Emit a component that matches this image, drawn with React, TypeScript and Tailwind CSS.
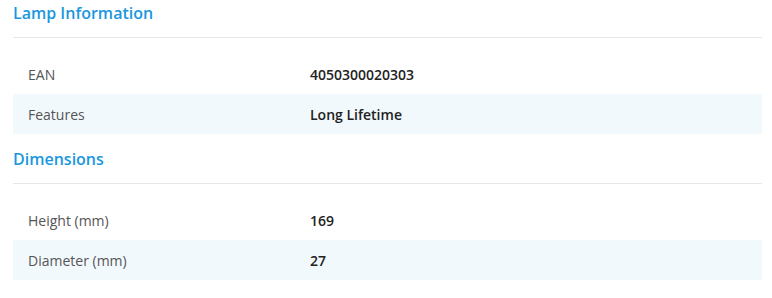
export default function App() {
  const sections = [
    {
      title: "Lamp Information",
      rows: [
        { label: "EAN", value: "4050300020303" },
        { label: "Features", value: "Long Lifetime" },
      ],
    },
    {
      title: "Dimensions",
      rows: [
        { label: "Height (mm)", value: "169" },
        { label: "Diameter (mm)", value: "27" },
      ],
    },
  ]

  return (
    <div className="w-[772px] h-[298px] bg-white pl-[13px] pr-[10px] font-['Open_Sans',sans-serif] overflow-hidden">
      {sections.map((section, i) => (
        <div key={section.title} className={i > 0 ? "mt-[12px]" : ""}>
          <h3 className="text-[16px] leading-[24px] font-semibold text-[#1a97dd] pt-[1px] pb-[12px] border-b border-[#e6e6e6]">
            {section.title}
          </h3>
          <div className="pt-[16px]">
            {section.rows.map((row, j) => (
              <div
                key={row.label}
                className={`grid grid-cols-[297px_1fr] h-[40px] pt-[2px] items-center text-[14px] leading-[20px] ${j % 2 === 1 ? "bg-[#f2f9fd]" : ""}`}
              >
                <div className="pl-[15px] text-[#555555]">{row.label}</div>
                <div className="font-semibold text-[#222222]">{row.value}</div>
              </div>
            ))}
          </div>
        </div>
      ))}
    </div>
  )
}
